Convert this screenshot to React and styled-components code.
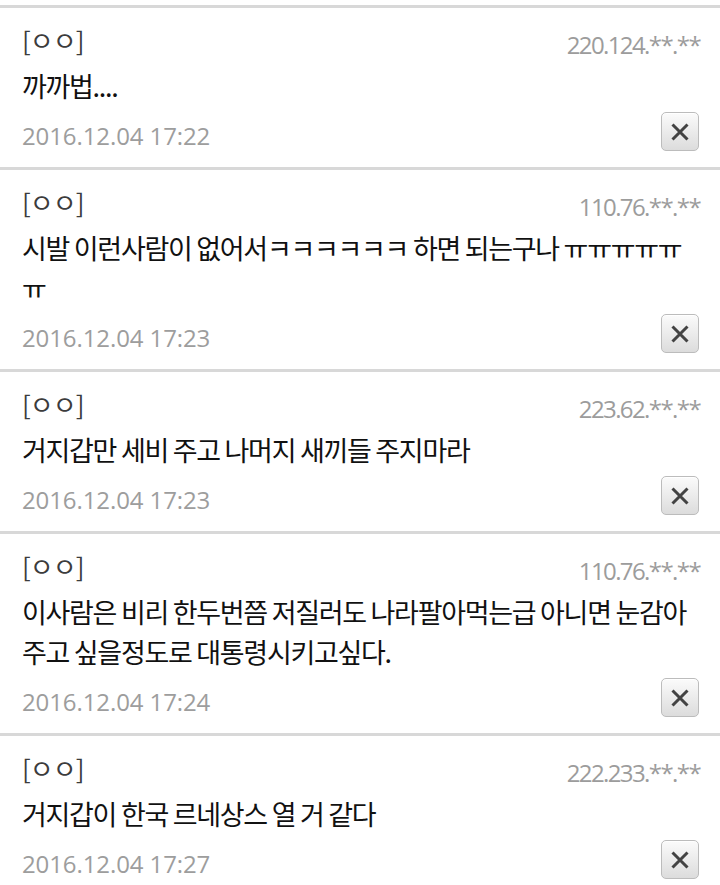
import React from "react";
import styled, { createGlobalStyle } from "styled-components";

const GlobalStyle = createGlobalStyle`
  html, body {
    margin: 0;
    padding: 0;
    background: #fff;
  }
  body {
    font-family: "Noto Sans CJK KR", "Noto Sans", sans-serif;
  }
`;

const comments = [
  {
    ip: "220.124.**.**",
    text: "까까법....",
    date: "2016.12.04 17:22",
  },
  {
    ip: "110.76.**.**",
    text: "시발 이런사람이 없어서ㅋㅋㅋㅋㅋㅋ 하면 되는구나 ㅠㅠㅠㅠㅠㅠ",
    date: "2016.12.04 17:23",
  },
  {
    ip: "223.62.**.**",
    text: "거지갑만 세비 주고 나머지 새끼들 주지마라",
    date: "2016.12.04 17:23",
  },
  {
    ip: "110.76.**.**",
    text: "이사람은 비리 한두번쯤 저질러도 나라팔아먹는급 아니면 눈감아 주고 싶을정도로 대통령시키고싶다.",
    date: "2016.12.04 17:24",
  },
  {
    ip: "222.233.**.**",
    text: "거지갑이 한국 르네상스 열 거 같다",
    date: "2016.12.04 17:27",
  },
];

const List = styled.ul`
  list-style: none;
  margin: 0;
  padding: 5px 0 0;
`;

const Comment = styled.li`
  border-top: 3px solid #d8d8d8;
  padding: 14px 21px 16px 22px;
`;

const Header = styled.div`
  display: flex;
  justify-content: space-between;
  align-items: flex-end;
  height: 36px;
`;

const Name = styled.span`
  font-size: 26px;
  line-height: 36px;
  color: #3c3c3c;
  letter-spacing: -1px;
`;

const Ip = styled.span`
  font-family: "Open Sans", "Noto Sans", sans-serif;
  font-size: 24px;
  line-height: 26px;
  color: #9c9c9c;
  letter-spacing: -1.6px;
  margin-right: -1px;
`;

const Body = styled.p`
  margin: 8px 0 0;
  font-size: 27px;
  line-height: 40px;
  color: #111;
  letter-spacing: -1.3px;
  word-break: break-all;
`;

const Footer = styled.div`
  display: flex;
  justify-content: space-between;
  align-items: flex-end;
  margin-top: 6px;
`;

const Date = styled.span`
  font-family: "Open Sans", "Noto Sans", sans-serif;
  font-size: 24px;
  line-height: 30px;
  color: #9d9d9d;
  letter-spacing: -0.1px;
`;

const DeleteButton = styled.button`
  display: flex;
  align-items: center;
  justify-content: center;
  width: 38px;
  height: 39px;
  padding: 0;
  border: 1px solid #bcbcbc;
  border-radius: 5px;
  background: linear-gradient(#fbfbfb, #dcdcdc);
  box-shadow: inset 0 1px 0 #fff;
`;

const CloseIcon = () => (
  <svg width="18" height="18" viewBox="0 0 18 18">
    <path
      d="M1.5 1.5 L16.5 16.5 M16.5 1.5 L1.5 16.5"
      stroke="#434343"
      strokeWidth="3"
      strokeLinecap="butt"
    />
  </svg>
);

export default function App() {
  return (
    <>
      <GlobalStyle />
      <List>
        {comments.map((c, i) => (
          <Comment key={i}>
            <Header>
              <Name>[ㅇㅇ]</Name>
              <Ip>{c.ip}</Ip>
            </Header>
            <Body>{c.text}</Body>
            <Footer>
              <Date>{c.date}</Date>
              <DeleteButton aria-label="삭제">
                <CloseIcon />
              </DeleteButton>
            </Footer>
          </Comment>
        ))}
      </List>
    </>
  );
}
